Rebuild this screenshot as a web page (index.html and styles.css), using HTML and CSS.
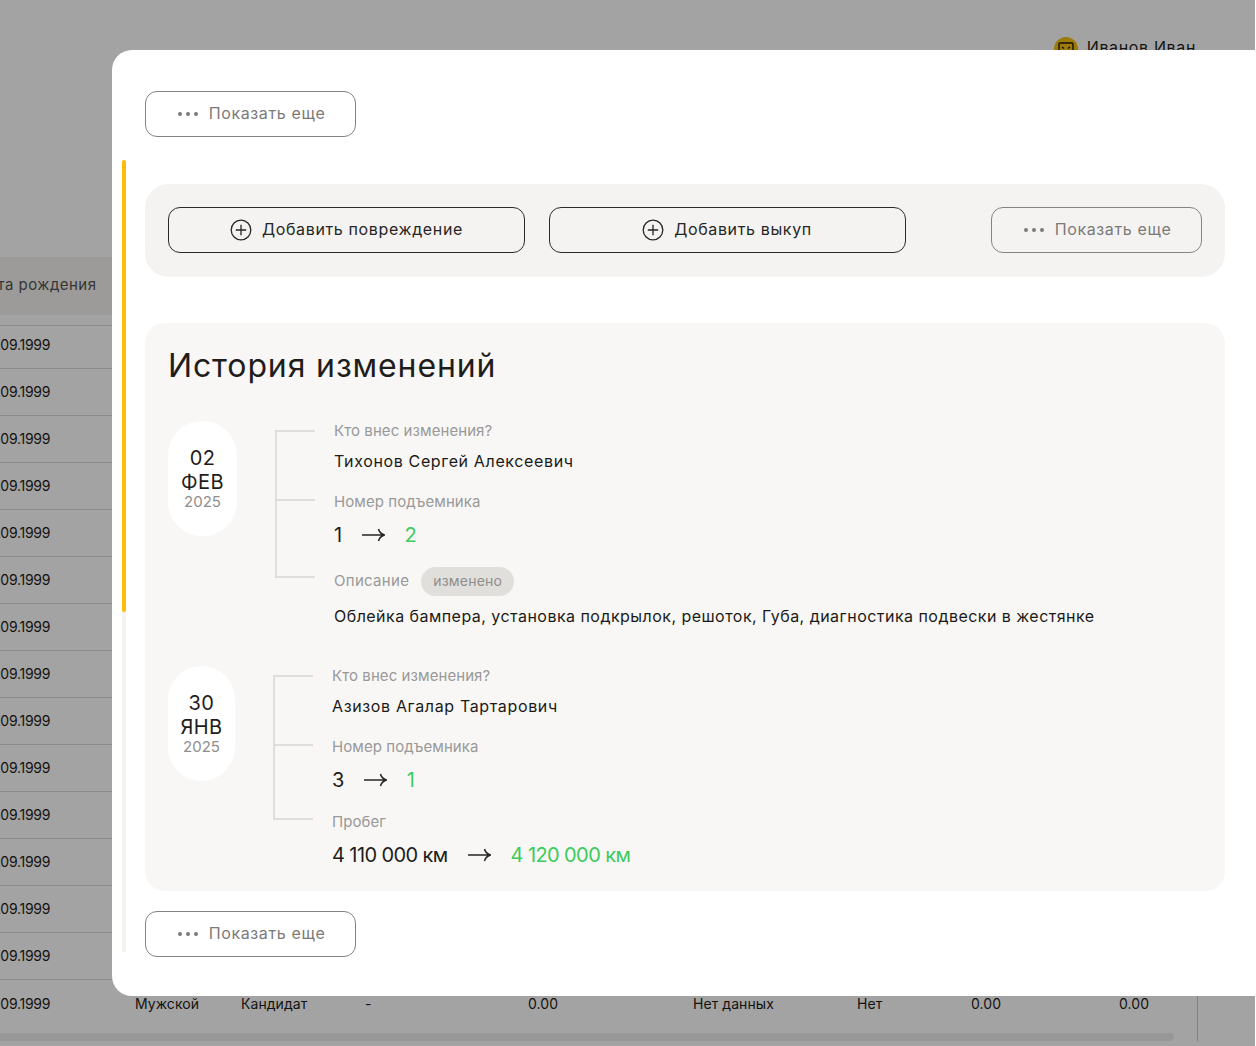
FILE: index.html
```html
<!DOCTYPE html>
<html lang="ru">
  <head>
    <meta charset="UTF-8" />
    <meta name="viewport" content="width=device-width, initial-scale=1.0" />
    <title>История изменений</title>
    <link rel="stylesheet" href="styles.css">
  </head>
  <body>
    <div class="page">
      <header class="topbar">
        <div class="user">
          <span class="user-avatar">
            <svg width="16" height="16" viewBox="0 0 16 16" fill="none" stroke="#1f1a0c" stroke-width="1.4"><rect x="1" y="2" width="14" height="12" rx="1" /><path d="M4 6l2 1.5M12 6l-2 1.5" /></svg>
          </span>
          <span>Иванов Иван</span>
        </div>
      </header>
      <div class="table">
        <div class="table-head">Дата рождения</div>
        <div class="table-row table-row-first"><span>01.09.1999</span></div>
        <div class="table-row"><span>01.09.1999</span></div>
        <div class="table-row"><span>01.09.1999</span></div>
        <div class="table-row"><span>01.09.1999</span></div>
        <div class="table-row"><span>01.09.1999</span></div>
        <div class="table-row"><span>01.09.1999</span></div>
        <div class="table-row"><span>01.09.1999</span></div>
        <div class="table-row"><span>01.09.1999</span></div>
        <div class="table-row"><span>01.09.1999</span></div>
        <div class="table-row"><span>01.09.1999</span></div>
        <div class="table-row"><span>01.09.1999</span></div>
        <div class="table-row"><span>01.09.1999</span></div>
        <div class="table-row"><span>01.09.1999</span></div>
        <div class="table-row"><span>01.09.1999</span></div>
        <div class="table-row table-row-last">
          <span>01.09.1999</span><span>Мужской</span><span>Кандидат</span><span>-</span><span>0.00</span><span>Нет данных</span><span>Нет</span><span>0.00</span><span>0.00</span>
        </div>
        <div class="table-scroll"></div>
      </div>
    </div>

    <div class="overlay"></div>

    <div class="modal">
      <div class="modal-scroll"><div class="modal-scroll-thumb"></div></div>

      <button class="btn btn-ghost">
        <svg width="20" height="4" viewBox="0 0 20 4" fill="#7c7a78"><circle cx="2" cy="2" r="2" /><circle cx="10" cy="2" r="2" /><circle cx="18" cy="2" r="2" /></svg>
        Показать еще
      </button>

      <div class="panel">
        <button class="btn btn-primary">
          <svg width="22" height="22" viewBox="0 0 22 22" fill="none" stroke="#262626" stroke-width="1.3"><circle cx="11" cy="11" r="9.8" /><path d="M11 5.800v10.400M5.800 11h10.400" /></svg>
          Добавить повреждение
        </button>
        <button class="btn btn-primary">
          <svg width="22" height="22" viewBox="0 0 22 22" fill="none" stroke="#262626" stroke-width="1.3"><circle cx="11" cy="11" r="9.8" /><path d="M11 5.800v10.400M5.800 11h10.400" /></svg>
          Добавить выкуп
        </button>
        <button class="btn btn-ghost btn-end">
          <svg width="20" height="4" viewBox="0 0 20 4" fill="#7c7a78"><circle cx="2" cy="2" r="2" /><circle cx="10" cy="2" r="2" /><circle cx="18" cy="2" r="2" /></svg>
          Показать еще
        </button>
      </div>

      <section class="history">
        <h2 class="history-title">История изменений</h2>

        <div class="change">
          <div class="date date-wide">
            <div class="date-num">02</div>
            <div class="date-num">ФЕВ</div>
            <div class="date-year">2025</div>
          </div>
          <svg class="tree" width="41" height="148" viewBox="0 0 41 148" fill="none" stroke="#dfdedb" stroke-width="2"><path d="M40 1H1V147H40M1 70H40" /></svg>
          <div class="fields">
            <div class="label">Кто внес изменения?</div>
            <div class="value value-name">Тихонов Сергей Алексеевич</div>
            <div class="label label-next">Номер подъемника</div>
            <div class="diff">
              <span>1</span>
              <svg width="23" height="14" viewBox="0 0 23 14" fill="none" stroke="#262626" stroke-width="1.5"><path d="M0 7H22.500M16.500 1c.6 3 3 5 6 6-3 1-5.400 3-6 6" /></svg>
              <span class="diff-new">2</span>
            </div>
            <div class="label-row">
              <span class="label">Описание</span>
              <span class="tag">изменено</span>
            </div>
            <div class="value value-text">Облейка бампера, установка подкрылок, решоток, Губа, диагностика подвески в жестянке</div>
          </div>
        </div>

        <div class="change change-next">
          <div class="date">
            <div class="date-num">30</div>
            <div class="date-num">ЯНВ</div>
            <div class="date-year">2025</div>
          </div>
          <svg class="tree" width="41" height="145" viewBox="0 0 41 145" fill="none" stroke="#dfdedb" stroke-width="2"><path d="M40 1H1V144H40M1 70H40" /></svg>
          <div class="fields">
            <div class="label">Кто внес изменения?</div>
            <div class="value value-name">Азизов Агалар Тартарович</div>
            <div class="label label-next">Номер подъемника</div>
            <div class="diff">
              <span>3</span>
              <svg width="23" height="14" viewBox="0 0 23 14" fill="none" stroke="#262626" stroke-width="1.5"><path d="M0 7H22.500M16.500 1c.6 3 3 5 6 6-3 1-5.400 3-6 6" /></svg>
              <span class="diff-new">1</span>
            </div>
            <div class="label label-last">Пробег</div>
            <div class="diff">
              <span>4 110 000 км</span>
              <svg width="23" height="14" viewBox="0 0 23 14" fill="none" stroke="#262626" stroke-width="1.5"><path d="M0 7H22.500M16.500 1c.6 3 3 5 6 6-3 1-5.400 3-6 6" /></svg>
              <span class="diff-new">4 120 000 км</span>
            </div>
          </div>
        </div>
      </section>

      <button class="btn btn-ghost btn-bottom">
        <svg width="20" height="4" viewBox="0 0 20 4" fill="#7c7a78"><circle cx="2" cy="2" r="2" /><circle cx="10" cy="2" r="2" /><circle cx="18" cy="2" r="2" /></svg>
        Показать еще
      </button>
    </div>
  </body>
</html>
```

FILE: styles.css
```css
html,
body {
  margin: 0;
  height: 100%;
  overflow: hidden;
}

body {
  position: relative;
  background-color: #fff;
  font-family: Inter, 'Noto Sans', sans-serif;
  color: #1f1d1b;
}

/* page under the modal */
.page {
  height: 1046px;
  overflow: hidden;
}

.topbar {
  display: flex;
  justify-content: flex-end;
  box-sizing: border-box;
  height: 257px;
  padding: 37px 60px 0 0;
}

.user {
  display: flex;
  align-items: flex-start;
  gap: 9px;
  font-size: 16px;
  line-height: 20px;
  letter-spacing: 0.04em;
}

.user-avatar {
  display: flex;
  align-items: center;
  justify-content: center;
  width: 24px;
  height: 24px;
  border-radius: 50%;
  background-color: #f5bf13;
}

.table {
  box-sizing: border-box;
  width: 1222px;
  margin-left: -24px;
  border-right: 1px solid #ccc;
  font-size: 14px;
  letter-spacing: 0.005em;
}

.table-head {
  height: 58px;
  margin-bottom: 10px;
  background-color: #f4f3f0;
  font-size: 15px;
  line-height: 56px;
  letter-spacing: 0.03em;
  color: #555;
}

.table-row {
  display: grid;
  grid-template-columns: 159px 106px 124px 163px 165px 164px 114px 148px 79px;
  align-items: center;
  box-sizing: border-box;
  height: 47px;
  padding-bottom: 1px;
  border-bottom: 1px solid #d9d9d9;
}

.table-row span:first-child {
  padding-left: 7px;
  letter-spacing: -0.02em;
}

.table-row-first {
  height: 44px;
  padding-bottom: 5px;
  border-top: 1px solid #d9d9d9;
}

.table-row-last {
  padding-bottom: 0;
  border-bottom: 0;
}

.table-scroll {
  width: 1198px;
  height: 8px;
  margin-top: 6px;
  border-radius: 4px;
  background-color: #ececec;
}

.overlay {
  position: absolute;
  inset: 0 1px 0 0;
  background-color: rgba(0, 0, 0, 0.36);
}

/* modal */
.modal {
  position: absolute;
  top: 50px;
  left: 112px;
  box-sizing: border-box;
  width: 1144px;
  height: 946px;
  padding: 41px 31px 0 33px;
  border-radius: 20px 0 0 20px;
  background-color: #fff;
}

.modal-scroll {
  position: absolute;
  top: 110px;
  left: 10px;
  width: 4px;
  height: 792px;
  background-color: #f5f3f0;
}

.modal-scroll-thumb {
  height: 452px;
  border-radius: 2px;
  background-color: #fdbc05;
}

.btn {
  display: flex;
  align-items: center;
  justify-content: center;
  box-sizing: border-box;
  height: 46px;
  padding: 0 0 2px;
  border: 1px solid;
  border-radius: 12px;
  background: none;
  font-family: inherit;
  font-size: 16px;
  letter-spacing: 0.04em;
}

.btn svg {
  margin-top: 2px;
}

.btn-ghost {
  gap: 11px;
  width: 211px;
  padding-left: 2px;
  border-color: #858381;
  color: #7c7a78;
}

.btn-primary {
  gap: 10px;
  width: 357px;
  border-color: #2a2a2a;
  color: #262626;
}

.btn-end {
  margin-left: auto;
}

.btn-bottom {
  margin-top: 20px;
}

.panel {
  display: flex;
  gap: 23.5px;
  margin-top: 47px;
  padding: 23px 23px 24px;
  border-radius: 24px;
  background-color: #f4f3f1;
}

.history {
  margin-top: 46px;
  padding: 23px 23px 24px;
  border-radius: 20px;
  background-color: #f8f7f5;
}

.history-title {
  margin: 0 0 35px;
  font-size: 32px;
  font-weight: 400;
  line-height: 40px;
  letter-spacing: 0.027em;
}

.change {
  display: flex;
  align-items: flex-start;
}

.change-next {
  margin-top: 40px;
}

.date {
  box-sizing: border-box;
  width: 67px;
  height: 115px;
  padding-top: 26px;
  border-radius: 34px;
  background-color: #fff;
  text-align: center;
}

.date-wide {
  width: 69px;
}

.date-num {
  font-size: 20px;
  line-height: 23px;
  letter-spacing: 0.02em;
}

.date-num + .date-num {
  margin-top: 1px;
}

.date-year {
  margin-top: -1px;
  font-size: 15px;
  line-height: 17px;
  color: #8f8e8c;
}

.tree {
  flex: none;
  margin: 9px 18px 0 38px;
}

.label {
  font-size: 15px;
  line-height: 20px;
  letter-spacing: 0.005em;
  color: #999;
}

.label-next {
  margin-top: 21px;
}

.label-last {
  margin-top: 20px;
}

.label-row {
  display: flex;
  align-items: center;
  gap: 12px;
  margin-top: 20px;
}

.label-row .label {
  margin-top: -2px;
  letter-spacing: 0.02em;
}

.tag {
  padding: 0 12px;
  border-radius: 15px;
  background-color: #e0dfdc;
  font-size: 14px;
  line-height: 28px;
  padding-bottom: 1px;
  letter-spacing: 0.015em;
  color: #8f8e8c;
}

.value {
  font-size: 16px;
  line-height: 20px;
  color: #1b1a18;
}

.value-name {
  margin-top: 10px;
  letter-spacing: 0.04em;
}

.value-text {
  margin-top: 10px;
  letter-spacing: 0.029em;
}

.diff {
  display: flex;
  align-items: center;
  gap: 20px;
  margin-top: 11px;
  font-size: 20px;
  line-height: 24px;
  letter-spacing: -0.03em;
}

.diff-new {
  color: #3ccb5c;
}
```
